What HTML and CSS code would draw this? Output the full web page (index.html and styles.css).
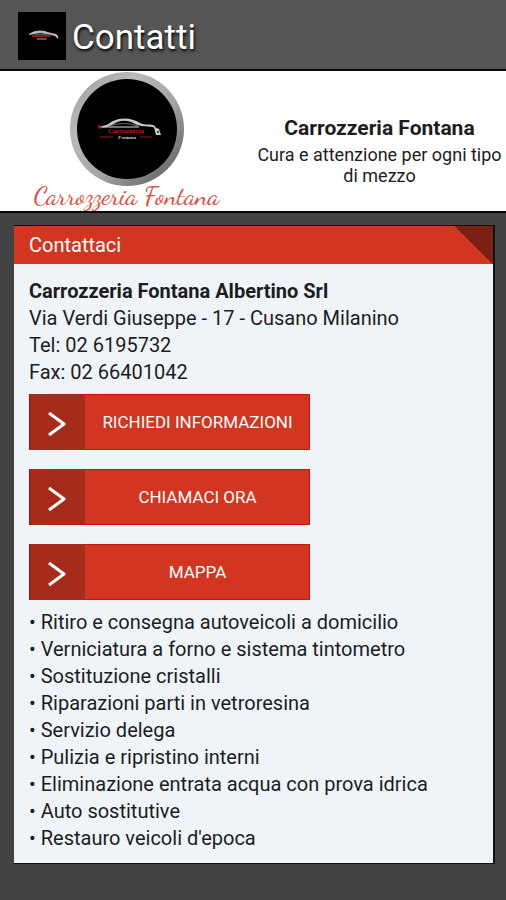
FILE: index.html
```html
<!DOCTYPE html>
<html lang="it">
<head>
<meta charset="utf-8">
<meta name="viewport" content="width=device-width, initial-scale=1">
<title>Contatti</title>
<link rel="stylesheet" href="styles.css">
</head>
<body>
<header class="appbar">
  <svg class="app-icon" viewBox="0 0 48 48" aria-hidden="true">
    <rect width="48" height="48" fill="#000"/>
    <path d="M11 22C16 18 23 18 27 19C31 21 36 21 38 22Q41 24 40 27L37 24C31 22 26 22 22 21Q16 22 11 23Z" fill="#bbb"/>
    <path d="M14 23Q24 20 35 24Q24 26 14 23Z" fill="#555"/>
    <path d="M14 24H32" stroke="#8c1717" stroke-width="2"/>
    <path d="M19 27H29" stroke="#555" stroke-width="2"/>
  </svg>
  <h1 class="title">Contatti</h1>
</header>
<section class="banner">
  <div class="brand">
    <svg class="emblem" viewBox="0 0 116 116" aria-hidden="true">
      <defs>
        <linearGradient id="ring" x1="0" y1="0" x2="1" y2="1">
          <stop offset="0" stop-color="#999"/>
          <stop offset=".3" stop-color="#bababa"/>
          <stop offset=".6" stop-color="#a2a2a2"/>
          <stop offset=".85" stop-color="#707070"/>
          <stop offset="1" stop-color="#999"/>
        </linearGradient>
      </defs>
      <circle cx="58" cy="58" r="57" fill="url(#ring)"/>
      <circle cx="58" cy="58" r="50" fill="#000"/>
      <path d="M31 55C37 55 39 53 44 50C53 46 63 47 71 52C76 55 82 52 86 55L87 58L84 56C77 55 72 56 66 53C58 48 50 49 43 54Q37 57 31 57Z" fill="#c8c8c8"/>
      <path d="M41 55Q54 50 69 55" fill="none" stroke="#666" stroke-width="1"/>
      <path d="M30 56H70" fill="none" stroke="#ddd" stroke-width="1"/>
      <path d="M29 54L34 56L30 58Z" fill="#e01822"/>
      <path d="M85 56L90 58L92 64L87 64Z" fill="#ccc"/>
      <circle cx="89" cy="61" r="1" fill="#222"/>
      <path d="M31 66H44M71 66H83" stroke="#9f1515" stroke-width="1"/>
      <text class="mark-red" x="57" y="62" text-anchor="middle">Carrozzeria</text>
      <text class="mark-white" x="58" y="68" text-anchor="middle">Fontana</text>
    </svg>
    <span class="wordmark">Carrozzeria Fontana</span>
  </div>
  <div class="intro">
    <h2 class="intro-name">Carrozzeria Fontana</h2>
    <p class="intro-text">Cura e attenzione per ogni tipo di mezzo</p>
  </div>
</section>
<main class="card">
  <h2 class="card-head">Contattaci</h2>
  <div class="card-body">
    <address class="contact">
      <strong>Carrozzeria Fontana Albertino Srl</strong><br>
      Via Verdi Giuseppe - 17 - Cusano Milanino<br>
      Tel: 02 6195732<br>
      Fax: 02 66401042
    </address>
    <div class="actions">
      <button class="action" type="button">
        <span class="arrow"><svg viewBox="0 0 18 26" aria-hidden="true"><path d="M1 2L16 13L1 24"/></svg></span>
        <span class="label">RICHIEDI INFORMAZIONI</span>
      </button>
      <button class="action" type="button">
        <span class="arrow"><svg viewBox="0 0 18 26" aria-hidden="true"><path d="M1 2L16 13L1 24"/></svg></span>
        <span class="label">CHIAMACI ORA</span>
      </button>
      <button class="action" type="button">
        <span class="arrow"><svg viewBox="0 0 18 26" aria-hidden="true"><path d="M1 2L16 13L1 24"/></svg></span>
        <span class="label">MAPPA</span>
      </button>
    </div>
    <ul class="services">
      <li>• Ritiro e consegna autoveicoli a domicilio</li>
      <li>• Verniciatura a forno e sistema tintometro</li>
      <li>• Sostituzione cristalli</li>
      <li>• Riparazioni parti in vetroresina</li>
      <li>• Servizio delega</li>
      <li>• Pulizia e ripristino interni</li>
      <li>• Eliminazione entrata acqua con prova idrica</li>
      <li>• Auto sostitutive</li>
      <li>• Restauro veicoli d'epoca</li>
    </ul>
  </div>
</main>
</body>
</html>
```
FILE: styles.css
```css
* {
  box-sizing: border-box;
}

body {
  margin: 0;
  background: #434343;
  color: #1c1d1e;
  font-family: Roboto, "Liberation Sans", sans-serif;
  font-size: 20px;
  line-height: 27px;
}

h1, h2, p, ul {
  margin: 0;
  padding: 0;
}

.appbar {
  display: flex;
  align-items: center;
  gap: 6px;
  padding: 12px 18px 9px;
  background: #555;
  border-bottom: 2px solid #080808;
}

.app-icon {
  width: 48px;
  height: 48px;
}

.title {
  padding-top: 4px;
  color: #fff;
  font-size: 35px;
  font-weight: 400;
  line-height: 44px;
  text-shadow: 1px 2px 3px #000;
}

.banner {
  display: grid;
  grid-template-columns: 1fr 1fr;
  background: #fff;
  border-bottom: 2px solid #080808;
}

.brand {
  display: flex;
  flex-direction: column;
  align-items: center;
}

.emblem {
  width: 116px;
  height: 116px;
}

.mark-red,
.mark-white {
  font-family: "Liberation Serif", serif;
  font-weight: 700;
  font-size: 7px;
  fill: #b51a1e;
}

.mark-white {
  font-size: 5px;
  font-style: italic;
  fill: #ddd;
}

.wordmark {
  padding-bottom: 6px;
  color: #e04a3c;
  font-family: "Dancing Script", "Liberation Serif", cursive;
  font-size: 26px;
  line-height: 18px;
  white-space: nowrap;
}

.intro {
  align-self: center;
  padding-top: 18px;
  text-align: center;
}

.intro-name {
  margin-bottom: 2px;
  font-size: 21px;
  font-weight: 700;
  line-height: 28px;
}

.intro-text {
  font-size: 18px;
  line-height: 21px;
}

.card {
  margin: 13px 13px 36px 14px;
  background: #eff4f9;
  box-shadow: 1px 0 0 1px #111;
}

.card-head {
  padding: 0 15px;
  background: linear-gradient(to top right, transparent 50%, #7c2013 50%) top right / 39px 38px no-repeat #d23621;
  color: #fff;
  font-size: 20px;
  font-weight: 400;
  line-height: 38px;
}

.card-body {
  padding: 14px 15px 11px;
}

.contact {
  font-style: normal;
}

.actions {
  display: grid;
  gap: 19px;
  max-width: 281px;
  margin: 8px 0 9px;
}

.action {
  display: grid;
  grid-template-columns: 56px 1fr;
  height: 56px;
  padding: 0;
  border: 0;
  background: #d23621;
  box-shadow: inset 0 0 0 1px #c81410;
  color: #fff;
  font: 400 17px/56px Roboto, "Liberation Sans", sans-serif;
}

.arrow {
  display: flex;
  align-items: center;
  justify-content: center;
  background: #a52b1b;
  box-shadow: inset 1px 0 #98120c;
}

.arrow svg {
  width: 18px;
  height: 26px;
  margin-top: 4px;
  fill: none;
  stroke: #fff;
  stroke-width: 3;
  stroke-linejoin: round;
}

.services {
  list-style: none;
}
```
